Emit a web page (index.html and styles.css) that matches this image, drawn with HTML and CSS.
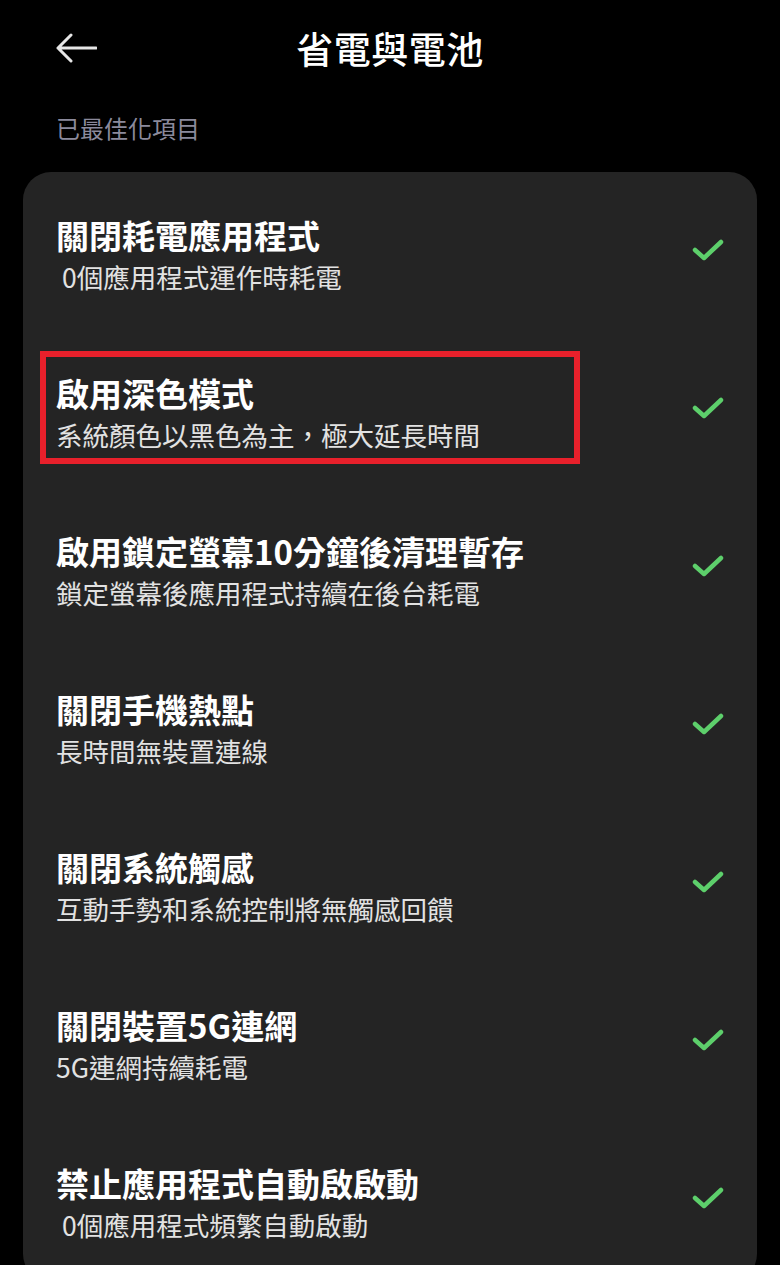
FILE: index.html
```html
<!DOCTYPE html>
<html lang="zh-Hant">
<head>
  <meta charset="UTF-8" />
  <title>省電與電池</title>
  <link rel="stylesheet" href="styles.css">
</head>
<body>

  <header class="topbar">
    <svg class="back" viewBox="0 0 42 30" width="42" height="30">
      <path d="M41 15 H3 M16 2 L3 15 L16 28" />
    </svg>
    <h1>省電與電池</h1>
    <span></span>
  </header>

  <p class="section-label">已最佳化項目</p>

  <div class="card">
    <div class="row">
      <div class="text">
        <div class="title">關閉耗電應用程式</div>
        <div class="desc">&nbsp;0個應用程式運作時耗電</div>
      </div>
      <svg class="check" viewBox="0 0 32 24" width="32" height="24"><path d="M3 12 L12 20 L29 4" /></svg>
    </div>

    <div class="row">
      <span class="highlight"></span>
      <div class="text">
        <div class="title">啟用深色模式</div>
        <div class="desc">系統顏色以黑色為主，極大延長時間</div>
      </div>
      <svg class="check" viewBox="0 0 32 24" width="32" height="24"><path d="M3 12 L12 20 L29 4" /></svg>
    </div>

    <div class="row">
      <div class="text">
        <div class="title">啟用鎖定螢幕10分鐘後清理暫存</div>
        <div class="desc">鎖定螢幕後應用程式持續在後台耗電</div>
      </div>
      <svg class="check" viewBox="0 0 32 24" width="32" height="24"><path d="M3 12 L12 20 L29 4" /></svg>
    </div>

    <div class="row">
      <div class="text">
        <div class="title">關閉手機熱點</div>
        <div class="desc">長時間無裝置連線</div>
      </div>
      <svg class="check" viewBox="0 0 32 24" width="32" height="24"><path d="M3 12 L12 20 L29 4" /></svg>
    </div>

    <div class="row">
      <div class="text">
        <div class="title">關閉系統觸感</div>
        <div class="desc">互動手勢和系統控制將無觸感回饋</div>
      </div>
      <svg class="check" viewBox="0 0 32 24" width="32" height="24"><path d="M3 12 L12 20 L29 4" /></svg>
    </div>

    <div class="row">
      <div class="text">
        <div class="title">關閉裝置5G連網</div>
        <div class="desc">5G連網持續耗電</div>
      </div>
      <svg class="check" viewBox="0 0 32 24" width="32" height="24"><path d="M3 12 L12 20 L29 4" /></svg>
    </div>

    <div class="row">
      <div class="text">
        <div class="title">禁止應用程式自動啟啟動</div>
        <div class="desc">&nbsp;0個應用程式頻繁自動啟動</div>
      </div>
      <svg class="check" viewBox="0 0 32 24" width="32" height="24"><path d="M3 12 L12 20 L29 4" /></svg>
    </div>
  </div>

</body>
</html>
```

FILE: styles.css
```css
body {
  font-family: "Noto Sans CJK TC", "Noto Sans", sans-serif;
  background-color: #000;
  color: #fff;
  margin: 0;
  height: 1265px;
  overflow: hidden;
}
.topbar {
  display: grid;
  grid-template-columns: 1fr auto 1fr;
  align-items: center;
  height: 96px;
  padding: 0 55px;
}
.back path {
  fill: none;
  stroke: #e6e6e6;
  stroke-width: 3;
  stroke-linecap: round;
  stroke-linejoin: round;
}
h1 {
  margin: 0;
  font-size: 37px;
  font-weight: 500;
  line-height: 48px;
  letter-spacing: 0.5px;
}
.section-label {
  margin: 12px 0 24px;
  padding-left: 56px;
  font-size: 24px;
  line-height: 40px;
  color: #8b8a9c;
}
.card {
  margin: 0 23px;
  padding-top: 4px;
  background-color: #242424;
  border-radius: 28px;
}
.row {
  position: relative;
  display: flex;
  align-items: center;
  justify-content: space-between;
  height: 158px;
  padding: 0 33px;
}
.title {
  font-size: 33px;
  font-weight: bold;
  line-height: 44px;
}
.desc {
  font-size: 26.5px;
  line-height: 40px;
  color: #e2e2e2;
}
.check {
  margin-top: -10px;
}
.check path {
  fill: none;
  stroke: #5dcf6b;
  stroke-width: 4.5;
  stroke-linecap: round;
  stroke-linejoin: round;
}
.highlight {
  position: absolute;
  top: 17px;
  left: 17px;
  width: 528px;
  height: 101px;
  border: 6px solid #e8202b;
}
```
